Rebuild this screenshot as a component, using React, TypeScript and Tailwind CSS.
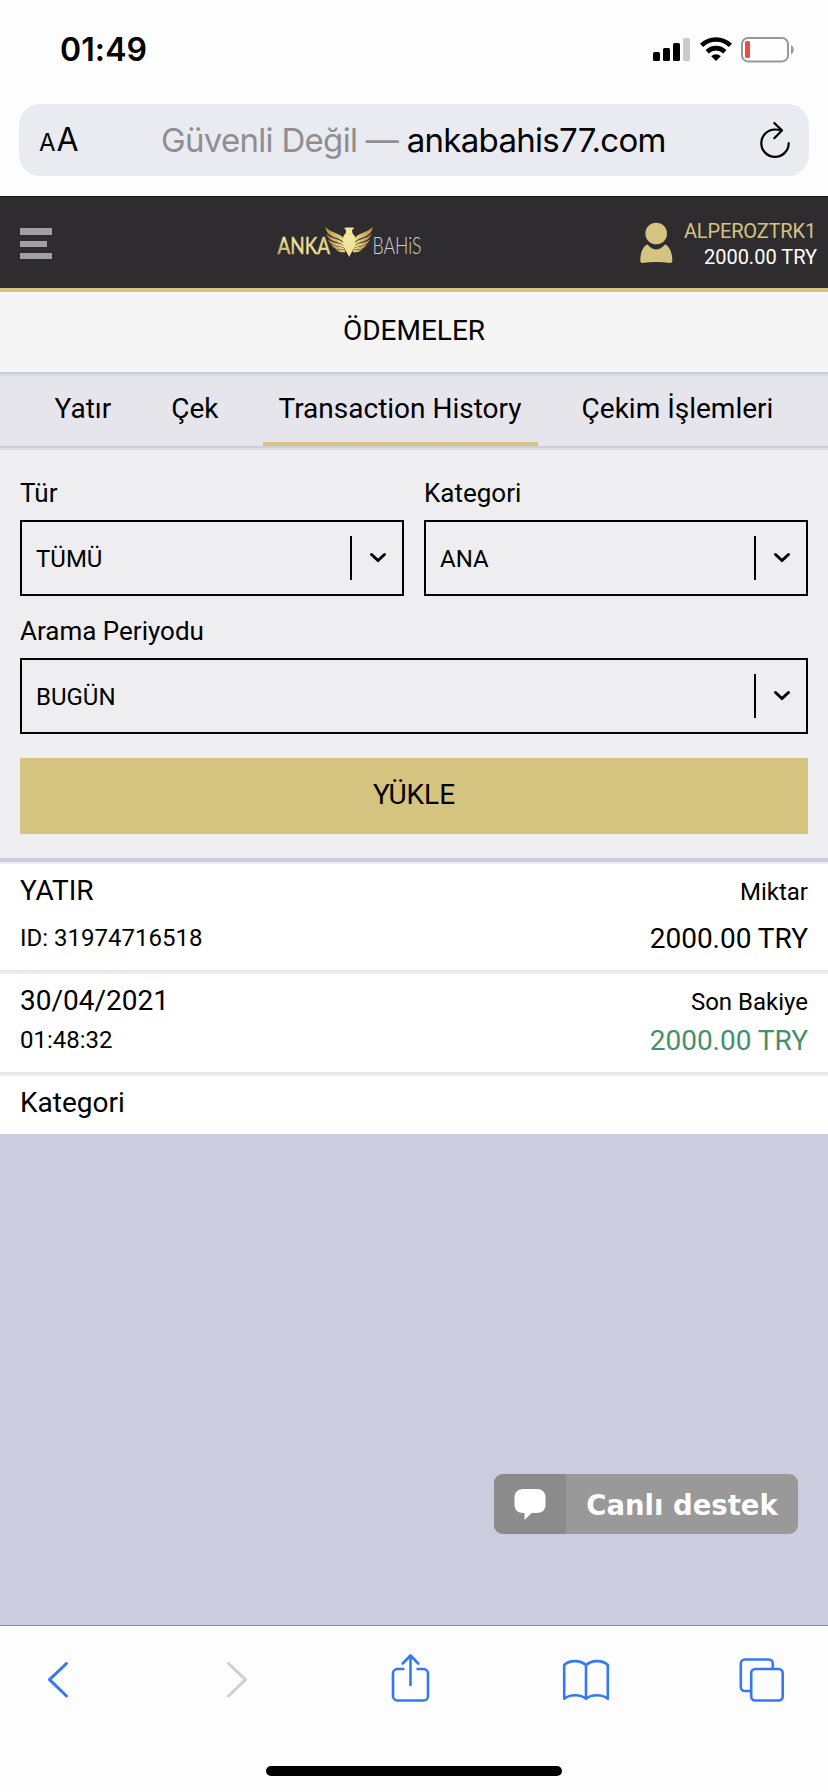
import type { ReactNode } from "react";

const tabs = ["Yatır", "Çek", "Transaction History", "Çekim İşlemleri"];
const activeTab = "Transaction History";

function StatusBar() {
  return (
    <div className="flex h-[104px] items-start justify-between pl-[60px] pr-[34px] font-['Inter',sans-serif]">
      <span className="mt-[30px] text-[32px] font-semibold leading-10 tracking-[0.1px]">
        01:49
      </span>
      <div className="mt-[37px] flex items-start">
        {/* Signal */}
        <svg width="37" height="26" viewBox="0 0 37 26" className="mr-[10px]">
          <rect x="0" y="15" width="7" height="9" rx="1.5" />
          <rect x="10" y="11" width="7" height="13" rx="1.5" />
          <rect x="20" y="6" width="7" height="18" rx="1.5" />
          <rect x="30" y="1" width="7" height="23" rx="1.5" fill="#c9c9ce" />
        </svg>
        {/* Wifi */}
        <svg width="32" height="26" viewBox="0 0 32 26" className="mr-[9px]">
          <g fill="none" stroke="#000" strokeWidth="4.6">
            <path d="M1.6 8.4a20.4 20.4 0 0 1 28.8 0" />
            <path d="M7.2 14.8a12.4 12.4 0 0 1 17.6 0" />
          </g>
          <path d="M16 24l-4.8-4.8a6.8 6.8 0 0 1 9.6 0z" />
        </svg>
        {/* Battery */}
        <svg width="53" height="26" viewBox="0 0 53 26">
          <rect
            x="1"
            y="1"
            width="46"
            height="23.4"
            rx="6"
            fill="none"
            stroke="#98989c"
            strokeWidth="2"
          />
          <rect x="4" y="4" width="5" height="17" rx="1.5" fill="#ea4e3d" />
          <path d="M50 8.2c3.6 1.6 3.6 7.4 0 9z" fill="#98989c" />
        </svg>
      </div>
    </div>
  );
}

function AddressBar() {
  return (
    <div className="mx-[19px] mb-5 flex h-[72px] items-center rounded-[21px] bg-[#eaebf0] font-['Inter',sans-serif]">
      <div className="flex w-[142px] items-baseline gap-px pl-[20px]">
        <span className="text-[24px]">A</span>
        <span className="text-[32px]">A</span>
      </div>
      <div className="flex-1 whitespace-nowrap pt-px text-[33px] tracking-[-0.7px]">
        <span className="text-[#8e8e93]">Güvenli Değil — </span>
        <span>ankabahis77.com</span>
      </div>
      <svg width="32" height="38" viewBox="0 0 32 38" className="mr-[18px]">
        <g
          fill="none"
          stroke="#000"
          strokeWidth="2.2"
          strokeLinecap="round"
          strokeLinejoin="round"
        >
          <path d="M29.7 22.2A13.7 13.7 0 1 1 16 8.5c2.4 0 4.3.2 6.6.7" />
          <path d="M15.3 2l7.6 7.4-7.6 7.8" />
        </g>
      </svg>
    </div>
  );
}

function Wing() {
  return (
    <g fill="url(#gold)">
      <path d="M48.300 3.500c2.500 4 8 5.500 12.500 7.500 3.500 1.500 6 4 7.500 7l-1 2c-2.500-3-6-4.500-9.500-5.500-5-1.800-9-5-9.500-11z" />
      <path d="M49.300 10.500c3 4 7.500 4.700 11.200 5.900 3 1 5.500 2.600 7 4.600v2c-2.500-2-5-3.200-8-4-5-1.200-9-4-10.200-8.500z" />
      <path d="M51 16.200c3 2.800 6.500 3.300 10 4.100 2.800.7 5 1.700 6.500 3.200v1.500c-2.500-1-5-1.600-7.500-2-4-.7-8-3-9-6.800z" />
      <path d="M54 21.200c3 1.800 5.500 2 8 2.500 2.200.4 4 1 5.500 2.100v1c-2.500-.3-4.500-.4-6.500-.6-3-.4-6-2.400-7-5z" />
      <path d="M58.500 26c2.500.9 5.500 1 9.500 1.200v2c-4 .6-7.500-.5-9.500-3.200z" />
    </g>
  );
}

function Logo() {
  return (
    <svg
      width="148"
      height="44"
      viewBox="0 -2 148 44"
      className="mt-[2px] overflow-visible"
    >
      <defs>
        <linearGradient id="gold" x1="0" x2="1">
          <stop offset="0" stopColor="#b98f3c" />
          <stop offset="1" stopColor="#f0e296" />
        </linearGradient>
        <linearGradient id="anka" x1="0" x2="1" y1="1" y2="0">
          <stop offset="0" stopColor="#b98f3c" />
          <stop offset=".4" stopColor="#f3e79f" />
          <stop offset="1" stopColor="#dcc474" />
        </linearGradient>
      </defs>
      <text
        x="0.5"
        y="30.5"
        fontSize="23.5"
        fill="url(#anka)"
        stroke="url(#anka)"
        strokeWidth="0.5"
        textLength="52.5"
        lengthAdjust="spacingAndGlyphs"
        className="font-['Lato',sans-serif]"
      >
        ANKA
      </text>
      <Wing />
      <g transform="translate(144 0) scale(-1 1)">
        <Wing />
      </g>
      <path
        d="M67 5.800c1-1.400 2.600-1.600 3.800-1.200h2.600c1.500-.4 3.300-.2 4.200 1.200-1.400-.2-2 .4-2.400 1.400-.3 2 .2 3.500 1.800 4.800 1.500 2 1.500 6 .9 9.500-.6 3.500-2 6-3.600 8.200L72.200 34l-2.400-4.500c-1.500-2.200-2.900-4.700-3.500-8.200-.6-3.500-.6-7.500.9-9.500 1.600-1.300 2.100-2.800 1.600-4.800-.4-1-1-1.400-1.800-1.200z"
        fill="#f1e59b"
      />
      <text
        x="95.500"
        y="30.5"
        fontSize="23.5"
        fill="#cfcfcf"
        textLength="49"
        lengthAdjust="spacingAndGlyphs"
        className="font-['Lato',sans-serif] font-light"
      >
        BAHiS
      </text>
    </svg>
  );
}

function Header() {
  return (
    <header className="flex h-24 items-center justify-between border-b-4 border-[#d4c480] bg-[#2f2c30] pl-5 pr-[11px] shadow-[inset_0_1px_0_#1c1b1d]">
      <div className="flex w-[257px] flex-col gap-[6px] pt-[3px]">
        <div className="h-[7px] w-8 bg-[#a09fa1]" />
        <div className="h-[6px] w-[27px] bg-[#a09fa1]" />
        <div className="h-[6px] w-8 bg-[#a09fa1]" />
      </div>
      <div className="flex-1">
        <Logo />
      </div>
      <div className="flex items-center gap-[11px]">
        <svg
          width="33"
          height="42"
          viewBox="0 0 33 42"
          fill="#d4c480"
          className="mt-[2px]"
        >
          <circle cx="16.2" cy="11.5" r="10.8" />
          <path d="M7.500 22.500C9.500 24.500 12.500 27.500 16.300 27.500S23 24.500 25 22.500c4.500 1.500 7.300 8.500 7.300 15.500 0 2-.6 3-2.300 3-9-1.200-18-1.200-27.500 0C.9 41 .3 40 .3 38c0-7 2.700-14 7.200-15.500z" />
        </svg>
        <div className="pt-1 text-right text-[20px] leading-[26px]">
          <div className="pr-px tracking-[-0.15px] text-[#d4c480]">
            ALPEROZTRK1
          </div>
          <div className="text-white">2000.00 TRY</div>
        </div>
      </div>
    </header>
  );
}

function Select({ label, value }: { label: string; value: string }) {
  return (
    <div className="flex-1">
      <div className="mb-3 text-[26px] leading-[30px]">{label}</div>
      <div className="flex h-[76px] items-center border-2 border-black pl-[14px] pr-[15px] text-[24px]">
        <span className="flex-1 pt-[2px]">{value}</span>
        <span className="h-11 w-[2px] bg-black" />
        <svg width="18" height="12" viewBox="0 0 18 12" className="ml-[17px]">
          <path
            d="M2.5 2.5L9 8.5l6.5-6"
            fill="none"
            stroke="#000"
            strokeWidth="3"
            strokeLinecap="round"
          />
        </svg>
      </div>
    </div>
  );
}

function Line({ children }: { children: ReactNode }) {
  return <div className="flex h-9 justify-between leading-9">{children}</div>;
}

function Toolbar() {
  return (
    <footer className="flex h-[167px] flex-col items-center border-t border-[#8f91a3] bg-[#fdfdfd]">
      <div className="flex w-full flex-1 items-start pl-[46px] pt-[26px]">
        <svg width="24" height="54" viewBox="0 0 24 54">
          <path
            d="M20.5 11.5L3.5 27.7l17 16.3"
            fill="none"
            stroke="#3478f6"
            strokeWidth="3"
            strokeLinecap="round"
            strokeLinejoin="round"
          />
        </svg>
        <svg width="24" height="54" viewBox="0 0 24 54" className="ml-[155px]">
          <path
            d="M3.5 11.5l17 16.2-17 16.3"
            fill="none"
            stroke="#cfcfd2"
            strokeWidth="3"
            strokeLinecap="round"
            strokeLinejoin="round"
          />
        </svg>
        <svg width="40" height="54" viewBox="0 0 40 54" className="ml-[141px]">
          <g fill="none" stroke="#3478f6" strokeWidth="2.6">
            <path d="M14.500 17H7.500a4.500 4.500 0 0 0-4.500 4.500v22.500a4.500 4.500 0 0 0 4.500 4.500h26a4.500 4.500 0 0 0 4.500-4.500V21.500a4.500 4.500 0 0 0-4.500-4.500h-7" />
            <path
              d="M20.500 33V4M12.700 11.500L20.500 3.500l7.800 8"
              strokeLinecap="round"
              strokeLinejoin="round"
            />
          </g>
        </svg>
        <svg width="50" height="54" viewBox="0 0 50 54" className="ml-[131px]">
          <path
            d="M25 13.200C20 8 8.500 7.500 3.200 13v33.800c5.500-4.800 16.500-4.800 21.800 0 5.300-4.800 16.300-4.800 21.800 0V13C41.500 7.500 30 8 25 13.200zM25 13.200v33.600"
            fill="none"
            stroke="#3478f6"
            strokeWidth="2.6"
            strokeLinejoin="round"
          />
        </svg>
        <svg width="50" height="54" viewBox="0 0 50 54" className="ml-[125px]">
          <g fill="none" stroke="#3478f6" strokeWidth="2.6">
            <path d="M14 39H8.800a4 4 0 0 1-4-4V11.500a4 4 0 0 1 4-4h24a4 4 0 0 1 4 4V17" />
            <rect x="15.2" y="17" width="31.5" height="31.5" rx="4" />
          </g>
        </svg>
      </div>
      <div className="mb-4 h-[10px] w-[296px] rounded-full bg-black" />
    </footer>
  );
}

export default function App() {
  return (
    <div className="flex h-[1792px] w-[828px] flex-col overflow-hidden bg-[#fdfdfd] font-['Roboto',sans-serif] text-black">
      <StatusBar />
      <AddressBar />

      <main className="relative flex flex-1 flex-col bg-[#cbcddf]">
        <Header />

        <h1 className="flex h-20 items-center justify-center bg-[#f5f5f5] pb-[3px] text-[28px]">
          ÖDEMELER
        </h1>

        {/* Tabs */}
        <nav className="flex h-[76px] justify-center gap-7 border-b-2 border-t-2 border-[#cacddf] bg-[#e6e5eb] shadow-[inset_0_2px_0_#d9d9df]">
          {tabs.map((tab) => (
            <div
              key={tab}
              className={
                tab === activeTab
                  ? "flex items-center border-b-4 border-[#d4c480] px-4 pt-[2px] text-[28px]"
                  : "flex items-center px-4 pb-[2px] text-[28px]"
              }
            >
              {tab}
            </div>
          ))}
        </nav>

        {/* Filters */}
        <section className="border-b-4 border-[#cacddf] bg-[#eeeef0] px-5 pb-6 pt-[30px] shadow-[inset_0_2px_0_#dfdfe3]">
          <div className="flex gap-5">
            <Select label="Tür" value="TÜMÜ" />
            <Select label="Kategori" value="ANA" />
          </div>
          <div className="mt-5">
            <Select label="Arama Periyodu" value="BUGÜN" />
          </div>
          <button className="mt-6 flex h-[76px] w-full items-center justify-center bg-[#d4c480] pb-[2px] text-[28px]">
            YÜKLE
          </button>
        </section>

        {/* Transaction */}
        <section className="border-t-2 border-[#eeeef0] bg-white">
          <div className="flex h-[108px] flex-col gap-[11px] border-b-2 border-[#e5e5ea] px-5 pt-[9px]">
            <Line>
              <span className="text-[28px]">YATIR</span>
              <span className="pt-px text-[24px]">Miktar</span>
            </Line>
            <Line>
              <span className="text-[24px]">ID: 31974716518</span>
              <span className="pt-px text-[28px]">2000.00 TRY</span>
            </Line>
          </div>
          <div className="flex h-[102px] flex-col gap-[3px] border-b-2 border-t-2 border-b-[#e5e5ea] border-t-[#eeeef0] px-5 pt-[9px]">
            <Line>
              <span className="text-[28px]">30/04/2021</span>
              <span className="pt-px text-[24px]">Son Bakiye</span>
            </Line>
            <Line>
              <span className="text-[24px]">01:48:32</span>
              <span className="pt-px text-[28px] text-[#45906c]">
                2000.00 TRY
              </span>
            </Line>
          </div>
          <div className="h-[60px] border-t-2 border-[#eeeef0] px-5 pt-[9px]">
            <Line>
              <span className="text-[28px]">Kategori</span>
            </Line>
          </div>
        </section>

        {/* Live chat */}
        <div className="absolute bottom-[91px] right-[30px] flex h-[60px] w-[304px] overflow-hidden rounded-[9px] bg-[#999] text-white">
          <div className="flex w-[72px] items-center justify-center bg-[#8b8b8b]">
            <svg width="32" height="32" viewBox="0 0 32 32" fill="#fff">
              <path d="M9.500 1h13C28 1 31.500 4.500 31.500 9v8c0 5-3.500 8-9 8h-5l-7 7v-7h-1c-5.500 0-9-3-9-8V9c0-4.500 3.500-8 9-8z" />
            </svg>
          </div>
          <div className="flex flex-1 items-center justify-center whitespace-nowrap pt-[3px] font-['DejaVu_Sans',sans-serif] text-[27.500px] font-bold">
            Canlı destek
          </div>
        </div>
      </main>

      <Toolbar />
    </div>
  );
}
